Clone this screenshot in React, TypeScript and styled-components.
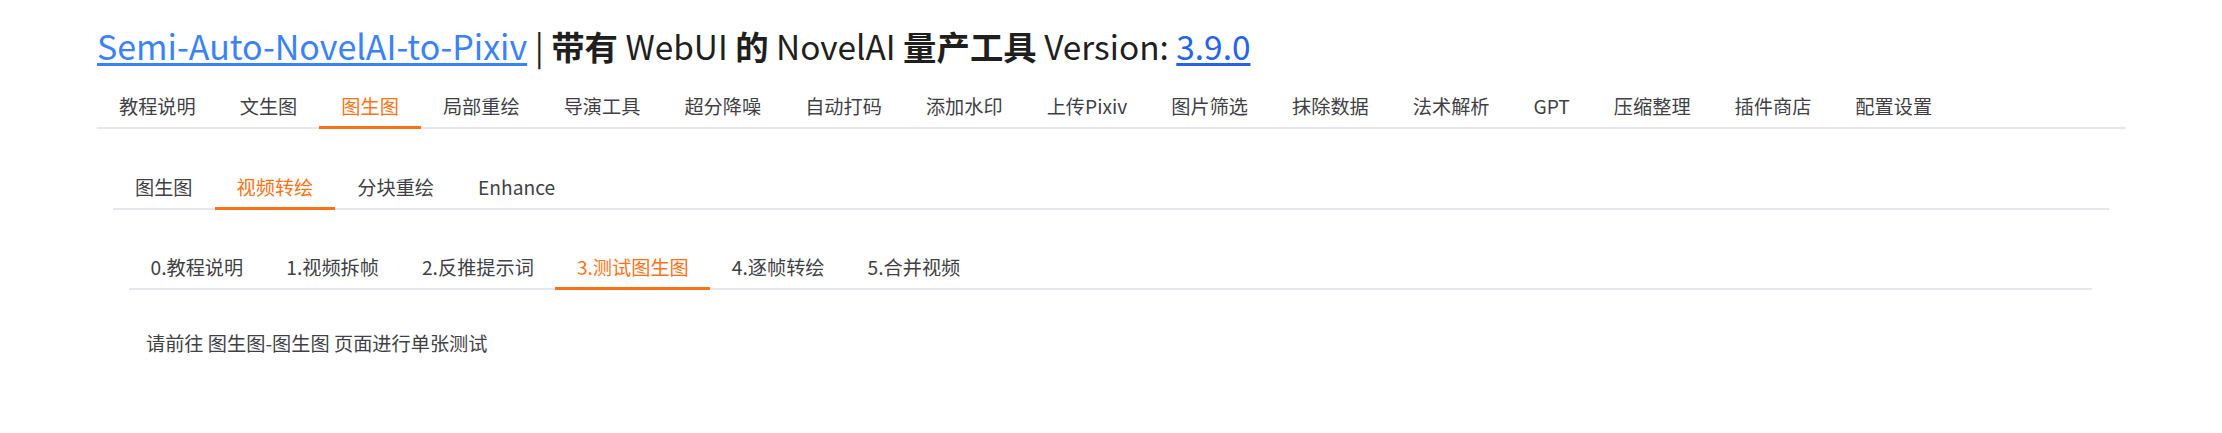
import React from "react";
import styled, { createGlobalStyle } from "styled-components";

const GlobalStyle = createGlobalStyle`
  body {
    margin: 0;
    background: #fff;
    font-family: "Noto Sans CJK SC", "Noto Sans", sans-serif;
  }
`;

const Page = styled.div`
  width: 2029px;
  padding: 25px 0 0 97px;
`;

const Title = styled.h1`
  margin: 0;
  font-size: 34px;
  line-height: 41px;
  font-weight: 400;
  color: #1f1f1f;
  white-space: nowrap;
`;

const TitleLink = styled.a<{ $dark?: boolean }>`
  color: ${(p) => (p.$dark ? "#2563eb" : "#3b82f6")};
  text-decoration: underline;
  text-underline-offset: 3px;
`;

const Rest = styled.span`
  font-size: 33.4px;
`;

const Bold = styled.span`
  font-weight: 700;
`;

const TabNav = styled.div<{ $top: number }>`
  display: flex;
  margin-top: ${(p) => p.$top}px;
  border-bottom: 2px solid #e5e7eb;
`;

const Tab = styled.button<{ $active?: boolean; $pad: number }>`
  box-sizing: border-box;
  height: 42px;
  margin-bottom: -2px;
  padding: 0 ${(p) => p.$pad}px;
  border: none;
  border-bottom: 3px solid ${(p) => (p.$active ? "#f97316" : "transparent")};
  background: none;
  font-family: "Noto Sans CJK SC", "Noto Sans", sans-serif;
  font-size: 19.2px;
  line-height: 29px;
  color: ${(p) => (p.$active ? "#f97316" : "#3f3f46")};
  cursor: pointer;
  white-space: nowrap;
`;

const Panel = styled.div`
  padding: 0 17px 0 16px;
`;

const Note = styled.p`
  margin: 39px 0 0 17px;
  font-size: 19.2px;
  line-height: 29px;
  color: #3f3f46;
`;

const mainTabs = [
  "教程说明",
  "文生图",
  "图生图",
  "局部重绘",
  "导演工具",
  "超分降噪",
  "自动打码",
  "添加水印",
  "上传Pixiv",
  "图片筛选",
  "抹除数据",
  "法术解析",
  "GPT",
  "压缩整理",
  "插件商店",
  "配置设置",
];

const subTabs = ["图生图", "视频转绘", "分块重绘", "Enhance"];

const stepTabs = [
  "0.教程说明",
  "1.视频拆帧",
  "2.反推提示词",
  "3.测试图生图",
  "4.逐帧转绘",
  "5.合并视频",
];

const Tabs = ({
  items,
  active,
  top,
  pad = 22,
}: {
  items: string[];
  active: string;
  top: number;
  pad?: number;
}) => (
  <TabNav $top={top}>
    {items.map((t) => (
      <Tab key={t} $active={t === active} $pad={pad}>
        {t}
      </Tab>
    ))}
  </TabNav>
);

export default function App() {
  return (
    <>
      <GlobalStyle />
      <Page>
        <Title>
          <TitleLink href="#">Semi-Auto-NovelAI-to-Pixiv</TitleLink>
          <Rest>
            {" "}| <Bold>带有</Bold> WebUI <Bold>的</Bold> NovelAI <Bold>量产工具</Bold> Version:{" "}
            <TitleLink href="#" $dark>
              3.9.0
            </TitleLink>
          </Rest>
        </Title>
        <Tabs items={mainTabs} active="图生图" top={21} />
        <Panel>
          <Tabs items={subTabs} active="视频转绘" top={39} />
          <Panel>
            <Tabs items={stepTabs} active="3.测试图生图" top={38} pad={21.5} />
            <Note>请前往 图生图-图生图 页面进行单张测试</Note>
          </Panel>
        </Panel>
      </Page>
    </>
  );
}
